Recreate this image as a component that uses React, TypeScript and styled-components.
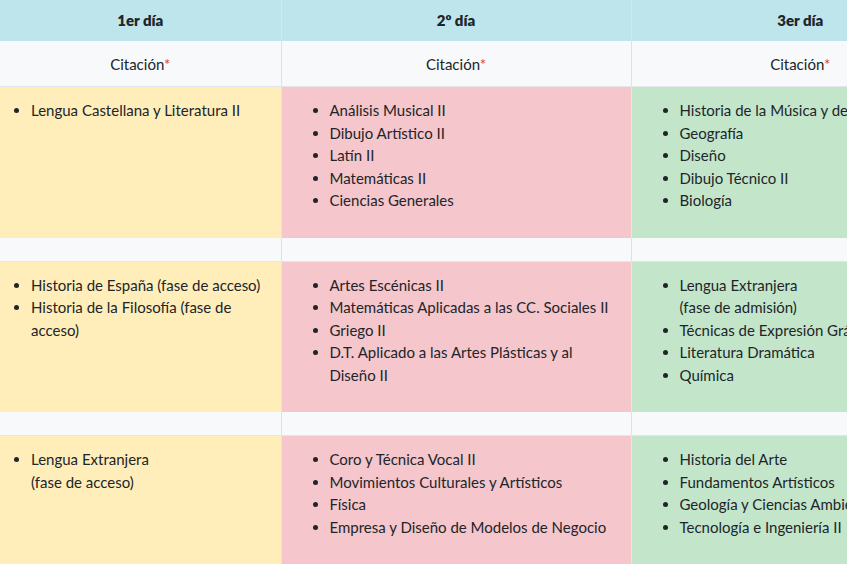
import styled, { createGlobalStyle } from 'styled-components';

type Tone = 'warning' | 'danger' | 'success';

interface DaySlot {
  tone: Tone;
  items: string[][];
}

const tones: Record<Tone, string> = {
  warning: '#ffeeba',
  danger: '#f5c6cb',
  success: '#c3e6cb',
};

const days = ['1er día', '2º día', '3er día'];

const sessions: DaySlot[][] = [
  [
    { tone: 'warning', items: [['Lengua Castellana y Literatura II']] },
    {
      tone: 'danger',
      items: [
        ['Análisis Musical II'],
        ['Dibujo Artístico II'],
        ['Latín II'],
        ['Matemáticas II'],
        ['Ciencias Generales'],
      ],
    },
    {
      tone: 'success',
      items: [
        ['Historia de la Música y de la Danza'],
        ['Geografía'],
        ['Diseño'],
        ['Dibujo Técnico II'],
        ['Biología'],
      ],
    },
  ],
  [
    {
      tone: 'warning',
      items: [
        ['Historia de España (fase de acceso)'],
        ['Historia de la Filosofía (fase de acceso)'],
      ],
    },
    {
      tone: 'danger',
      items: [
        ['Artes Escénicas II'],
        ['Matemáticas Aplicadas a las CC. Sociales II'],
        ['Griego II'],
        ['D.T. Aplicado a las Artes Plásticas y al Diseño II'],
      ],
    },
    {
      tone: 'success',
      items: [
        ['Lengua Extranjera', '(fase de admisión)'],
        ['Técnicas de Expresión Gráfico-Plástica'],
        ['Literatura Dramática'],
        ['Química'],
      ],
    },
  ],
  [
    { tone: 'warning', items: [['Lengua Extranjera', '(fase de acceso)']] },
    {
      tone: 'danger',
      items: [
        ['Coro y Técnica Vocal II'],
        ['Movimientos Culturales y Artísticos'],
        ['Física'],
        ['Empresa y Diseño de Modelos de Negocio'],
      ],
    },
    {
      tone: 'success',
      items: [
        ['Historia del Arte'],
        ['Fundamentos Artísticos'],
        ['Geología y Ciencias Ambientales'],
        ['Tecnología e Ingeniería II'],
      ],
    },
  ],
];

const App = () => {
  return (
    <>
      <GlobalStyle />
      <StyledWrap>
        <StyledTable>
          <colgroup>
            <col style={{ width: 281 }} />
            <col style={{ width: 350 }} />
            <col style={{ width: 338 }} />
          </colgroup>
          <thead>
            <tr>
              {days.map((day) => (
                <StyledHead key={day}>{day}</StyledHead>
              ))}
            </tr>
          </thead>
          <tbody>
            <tr>
              {days.map((day) => (
                <StyledCitation key={day}>
                  Citación<StyledRequired>*</StyledRequired>
                </StyledCitation>
              ))}
            </tr>
            {sessions.map((row, i) => (
              <RowGroup key={i} row={row} last={i === sessions.length - 1} />
            ))}
          </tbody>
        </StyledTable>
      </StyledWrap>
    </>
  );
};

const RowGroup = ({ row, last }: { row: DaySlot[]; last: boolean }) => (
  <>
    <tr>
      {row.map((slot, col) => (
        <StyledSlot key={col} $tone={slot.tone}>
          <StyledList $first={col === 0}>
            {slot.items.map((lines) => (
              <li key={lines.join()}>
                {lines.map((line, k) => (
                  <span key={line}>
                    {k > 0 && <br />}
                    {line}
                  </span>
                ))}
              </li>
            ))}
          </StyledList>
        </StyledSlot>
      ))}
    </tr>
    {!last && (
      <tr>
        {row.map((_, col) => (
          <StyledGap key={col} />
        ))}
      </tr>
    )}
  </>
);

/**
 * styles
 */
const GlobalStyle = createGlobalStyle`
  html, body {
    margin: 0;
    padding: 0;
    background: #fff;
    overflow: hidden;
  }

  body {
    font-family: Lato, "Open Sans", sans-serif;
    font-size: 15px;
    line-height: 1.5;
    color: #212529;
  }
`;

const StyledWrap = styled.div`
  width: 847px;
  height: 565px;
  overflow: hidden;
`;

const StyledTable = styled.table`
  width: 969px;
  table-layout: fixed;
  border-collapse: collapse;

  td,
  th {
    border-left: 1px solid #dee2e6;
    vertical-align: top;
  }

  td:first-child,
  th:first-child {
    border-left: 0;
  }
`;

const StyledHead = styled.th`
  background: #bee5eb;
  padding: 9px 8px 9px;
  text-align: center;
  font-weight: 800;
  border-left-color: #cbeaef !important;
`;

const StyledCitation = styled.td`
  background: #f8f9fa;
  padding: 12px 8px 11px;
  text-align: center;
  border-bottom: 1px solid #e3e6ea;
`;

const StyledRequired = styled.span`
  color: #dc3545;
`;

const StyledSlot = styled.td<{ $tone: Tone }>`
  background: ${({ $tone }) => tones[$tone]};
  padding: 12px 8px 10px;
  border-left-color: rgba(255, 255, 255, 0.35) !important;
`;

const StyledGap = styled.td`
  background: #f8f9fa;
  height: 23px;
  padding: 0;
  border-bottom: 1px solid #e3e6ea;
`;

const StyledList = styled.ul<{ $first: boolean }>`
  margin: 0 0 16px;
  padding-left: ${({ $first }) => ($first ? '23px' : '40px')};

  li span {
    display: inline;
  }
`;

export default App;
